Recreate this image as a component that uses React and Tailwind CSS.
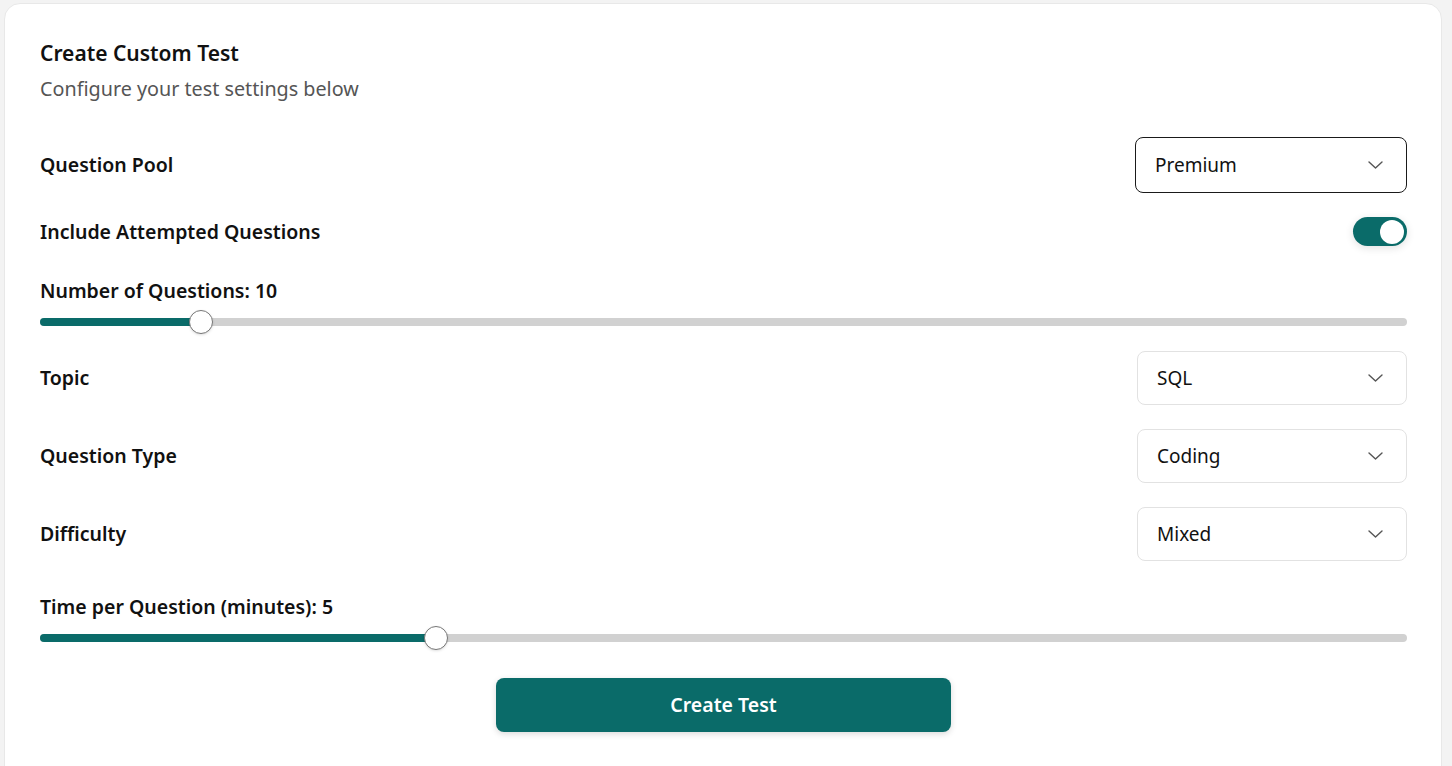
import React, { useState } from 'react';

const TEAL = 'bg-[#0a6b69]';

const Chevron = () => (
  <svg width="15" height="8" viewBox="0 0 15 8" fill="none" className="text-[#555]">
    <path d="M1 1l6.5 6 6.5-6" stroke="currentColor" strokeWidth="1.4" strokeLinecap="round" strokeLinejoin="round" />
  </svg>
);

const SelectBox = ({ value, focused }) => (
  <div
    className={`flex items-center justify-between rounded-lg bg-white pl-[19px] pr-[23px] text-[19px] text-[#111] ${
      focused ? 'border-[1.5px] border-[#1a1a1a] w-[272px] h-[56px]' : 'border border-[#e2e2e2] w-[270px] h-[54px]'
    }`}
  >
    <span>{value}</span>
    <Chevron />
  </div>
);

const Slider = ({ pct }) => (
  <div className="relative h-6 flex items-center">
    <div className="w-full h-2 rounded-full bg-[#d1d1d1] overflow-hidden">
      <div className={`h-full ${TEAL}`} style={{ width: `${pct}%` }} />
    </div>
    <div
      className="absolute top-0 w-6 h-6 -ml-3 rounded-full bg-white border border-[#777] shadow-sm"
      style={{ left: `${pct}%` }}
    />
  </div>
);

const App = () => {
  const [attempted, setAttempted] = useState(true);

  // thumb centre relative to track width
  const numPct = ((201 - 40) / 1367) * 100;
  const timePct = ((436 - 40) / 1367) * 100;

  const label = 'text-[19.5px] font-semibold text-[#111]';

  return (
    <div
      className="min-h-screen bg-[#f3f3f3] pt-[3px] pl-1 pr-[10px]"
      style={{ fontFamily: '"Noto Sans", "Open Sans", sans-serif' }}
    >
      <div className="bg-white rounded-2xl border border-[#e8e8e8] pt-[35px] pl-[35px] pr-[34px] pb-10 h-[800px]">
        {/* Header */}
        <h1 className="text-[21px] leading-7 font-semibold text-[#111]">Create Custom Test</h1>
        <p className="mt-[9px] text-[19.75px] leading-[26px] text-[#555]">Configure your test settings below</p>

        {/* Question Pool */}
        <div className="mt-[35px] flex items-center justify-between">
          <span className={label}>Question Pool</span>
          <SelectBox value="Premium" focused />
        </div>

        {/* Include Attempted */}
        <div className="mt-[24px] flex items-center justify-between h-[29px]">
          <span className={label}>Include Attempted Questions</span>
          <button
            onClick={() => setAttempted(!attempted)}
            className={`w-[54px] h-[29px] rounded-full flex items-center px-[3px] shadow-[0_2px_8px_rgba(0,0,0,0.12)] ${
              attempted ? `${TEAL} justify-end` : 'bg-gray-300 justify-start'
            }`}
          >
            <span className="w-6 h-6 rounded-full bg-white" />
          </button>
        </div>

        {/* Number of Questions */}
        <div className={`mt-8 leading-[26px] ${label}`}>Number of Questions: 10</div>
        <div className="mt-[6px]">
          <Slider pct={numPct} />
        </div>

        {/* Topic */}
        <div className="mt-[17px] flex items-center justify-between">
          <span className={label}>Topic</span>
          <SelectBox value="SQL" />
        </div>

        {/* Question Type */}
        <div className="mt-6 flex items-center justify-between">
          <span className={label}>Question Type</span>
          <SelectBox value="Coding" />
        </div>

        {/* Difficulty */}
        <div className="mt-6 flex items-center justify-between">
          <span className={label}>Difficulty</span>
          <SelectBox value="Mixed" />
        </div>

        {/* Time per Question */}
        <div className={`mt-[33px] leading-[26px] ${label}`}>Time per Question (minutes): 5</div>
        <div className="mt-[6px]">
          <Slider pct={timePct} />
        </div>

        {/* Submit */}
        <div className="mt-[28px] flex justify-center">
          <button className={`w-[455px] h-[54px] rounded-lg ${TEAL} text-white text-[19.5px] font-semibold shadow-[0_2px_6px_rgba(0,0,0,0.15)]`}>
            Create Test
          </button>
        </div>
      </div>
    </div>
  );
};

export default App;
